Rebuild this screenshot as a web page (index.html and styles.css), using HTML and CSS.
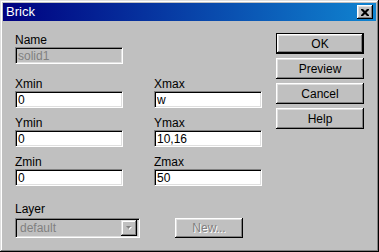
FILE: index.html
```html
<!DOCTYPE html>
<html lang="en">
<head>
    <meta charset="UTF-8">
    <title>Brick</title>
    <link rel="stylesheet" href="styles.css">
</head>
<body>
    <div class="window">
        <!-- title bar -->
        <div class="titlebar">
            <span class="title">Brick</span>
            <button class="close-btn" aria-label="Close">
                <svg width="8" height="7" viewBox="0 0 8 7">
                    <path d="M0 0h2l2 2 2-2h2v1l-2.5 2.5L8 6v1H6L4 5 2 7H0V6l2.5-2.5L0 1z" fill="#000"/>
                </svg>
            </button>
        </div>

        <div class="dialog">
            <div class="form">
                <div class="field">
                    <label class="label">Name</label>
                    <input class="edit" type="text" value="solid1" disabled>
                </div>

                <div class="coords">
                    <div class="field">
                        <label class="label">Xmin</label>
                        <input class="edit" type="text" value="0">
                    </div>
                    <div class="field">
                        <label class="label">Xmax</label>
                        <input class="edit" type="text" value="w">
                    </div>
                    <div class="field">
                        <label class="label">Ymin</label>
                        <input class="edit" type="text" value="0">
                    </div>
                    <div class="field">
                        <label class="label">Ymax</label>
                        <input class="edit" type="text" value="10,16">
                    </div>
                    <div class="field">
                        <label class="label">Zmin</label>
                        <input class="edit" type="text" value="0">
                    </div>
                    <div class="field">
                        <label class="label">Zmax</label>
                        <input class="edit" type="text" value="50">
                    </div>
                </div>

                <div class="layer-row">
                    <div class="field">
                        <label class="label">Layer</label>
                        <div class="combo">
                            <span class="combo-text">default</span>
                            <span class="combo-arrow">
                                <svg width="7" height="5" viewBox="0 0 7 5">
                                    <path d="M1 1h5l-2.5 3z" fill="#fff"/>
                                    <path d="M0 0h5l-2.5 3z" fill="#808080"/>
                                </svg>
                            </span>
                        </div>
                    </div>
                    <button class="btn btn-new" disabled>New...</button>
                </div>
            </div>

            <div class="buttons">
                <button class="btn btn-default">OK</button>
                <button class="btn">Preview</button>
                <button class="btn">Cancel</button>
                <button class="btn">Help</button>
            </div>
        </div>
    </div>
</body>
</html>
```

FILE: styles.css
```css
:root {
    --face: #c0c0c0;
    --light: #dfdfdf;
    --shadow: #808080;
    --dark: #000;
    --ui-font: 'Liberation Sans', Arial, sans-serif;
}

* {
    margin: 0;
    padding: 0;
    box-sizing: border-box;
}

body {
    background: var(--face);
    font-family: var(--ui-font);
    font-size: 12px;
    color: #000;
}

.window {
    width: 379px;
    height: 252px;
    padding: 3px;
    background: var(--face);
    box-shadow:
        inset -1px -1px var(--dark),
        inset 1px 1px var(--light),
        inset -2px -2px var(--shadow),
        inset 2px 2px #fff;
}

/* title bar */
.titlebar {
    height: 18px;
    display: flex;
    align-items: center;
    justify-content: space-between;
    padding: 0 3px 0 3px;
    background: linear-gradient(90deg, #000080, #1084d0);
}

.title {
    color: #fff;
    font-size: 13px;
    line-height: 18px;
}

.close-btn {
    width: 16px;
    height: 14px;
    display: flex;
    align-items: center;
    justify-content: center;
    border: none;
    background: var(--face);
    box-shadow:
        inset -1px -1px var(--dark),
        inset 1px 1px #fff,
        inset -2px -2px var(--shadow),
        inset 2px 2px var(--light);
}

/* dialog body */
.dialog {
    display: flex;
    gap: 14px;
    padding: 12px 12px 0 12px;
}

.form {
    width: 247px;
    display: flex;
    flex-direction: column;
}

.field {
    display: flex;
    flex-direction: column;
}

.label {
    line-height: 14px;
    height: 14px;
}

.edit {
    width: 108px;
    height: 17px;
    padding: 0 2px;
    font-family: var(--ui-font);
    font-size: 12px;
    color: #000;
    background: #fff;
    border: 1px solid;
    border-color: var(--shadow) #fff #fff var(--shadow);
    box-shadow: inset 1px 1px var(--dark), inset -1px -1px var(--light);
    outline: none;
}

.edit:disabled {
    background: var(--face);
    color: var(--shadow);
}

.coords {
    display: grid;
    grid-template-columns: 108px 108px;
    column-gap: 31px;
    row-gap: 8px;
    margin-top: 13px;
}

.layer-row {
    display: flex;
    align-items: flex-end;
    gap: 35px;
    margin-top: 16px;
}

.layer-row .label {
    margin-bottom: 2px;
}

.combo {
    width: 125px;
    height: 20px;
    display: flex;
    align-items: center;
    justify-content: space-between;
    padding: 2px;
    border: 1px solid;
    border-color: var(--shadow) #fff #fff var(--shadow);
    box-shadow: inset 1px 1px var(--dark), inset -1px -1px var(--light);
}

.combo-text {
    color: var(--shadow);
    padding-left: 2px;
}

.combo-arrow {
    width: 16px;
    height: 16px;
    display: flex;
    align-items: center;
    justify-content: center;
    background: var(--face);
    box-shadow:
        inset -1px -1px var(--dark),
        inset 1px 1px var(--light),
        inset -2px -2px var(--shadow),
        inset 2px 2px #fff;
}

/* push buttons */
.btn {
    width: 88px;
    height: 21px;
    font-family: var(--ui-font);
    font-size: 12px;
    color: #000;
    background: var(--face);
    border: none;
    box-shadow:
        inset -1px -1px var(--dark),
        inset 1px 1px #fff,
        inset -2px -2px var(--shadow),
        inset 2px 2px var(--light);
}

.btn:disabled {
    color: var(--shadow);
    text-shadow: 1px 1px #fff;
}

.btn-default {
    border: 1px solid var(--dark);
}

.btn-new {
    width: 68px;
    height: 20px;
}

.buttons {
    display: flex;
    flex-direction: column;
    gap: 4px;
}
```
